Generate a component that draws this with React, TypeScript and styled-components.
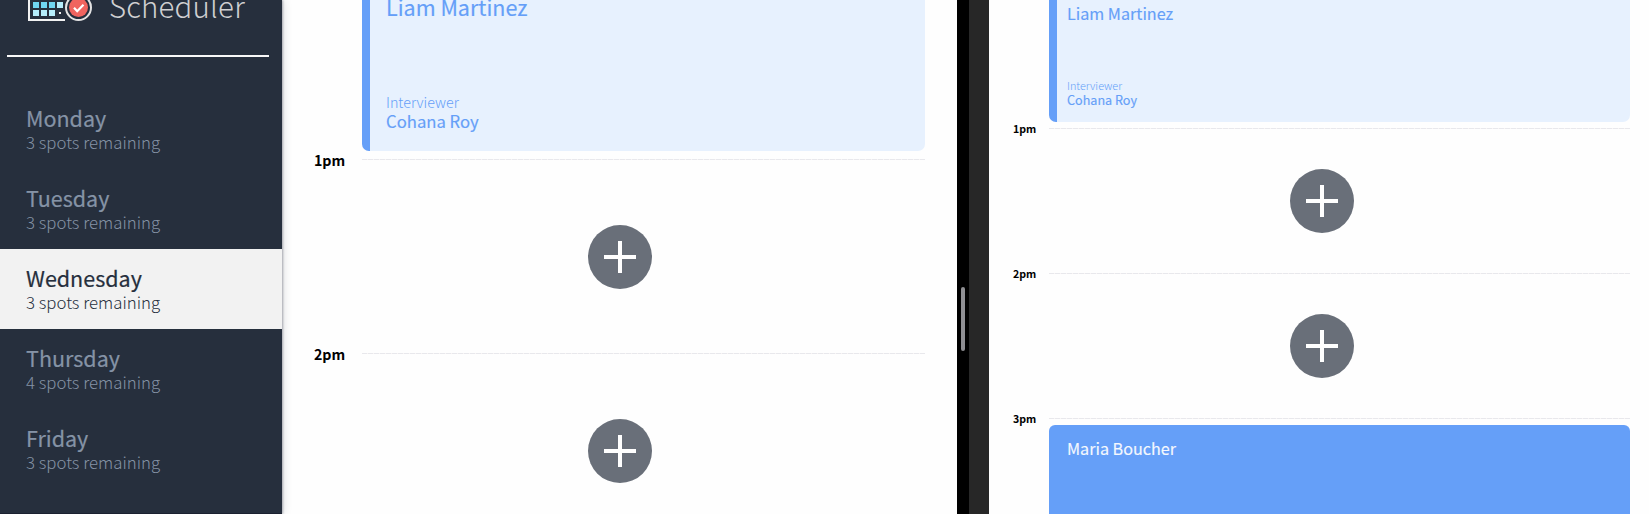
import React from "react";
import styled, { createGlobalStyle } from "styled-components";

const GlobalStyle = createGlobalStyle`
  *, *::before, *::after { box-sizing: border-box; }
  html, body, #root { margin: 0; height: 100%; }
  body {
    overflow: hidden;
    background: #fefefe;
    font-family: "Noto Sans CJK SC", "Noto Sans", sans-serif;
  }
`;

const Layout = styled.div`
  display: flex;
  width: 1649px;
  height: 514px;
  overflow: hidden;
`;

const Sidebar = styled.aside`
  position: relative;
  z-index: 1;
  flex: 0 0 282px;
  height: 100%;
  background: #262f3d;
  border-bottom: 1px solid #1b2130;
  box-shadow: 1px 0 2px rgba(39, 47, 63, 0.35), 2px 0 8px rgba(39, 47, 63, 0.14);
`;

const Brand = styled.div`
  display: flex;
  align-items: flex-end;
  height: 55px;
  padding: 0 0 31px 28px;
`;

const BrandName = styled.span`
  margin-left: 16px;
  height: 38px;
  line-height: 38px;
  font-size: 29.4px;
  font-weight: 300;
  letter-spacing: 0.2px;
  color: #d0d0d2;
`;

const Divider = styled.hr`
  width: 262px;
  height: 2px;
  margin: 0 0 32px 7px;
  border: 0;
  background: #f8f8f8;
`;

const DayItem = styled.div<{ $active?: boolean }>`
  height: 80px;
  padding: 16px 0 0 26px;
  background: ${(p) => (p.$active ? "#f2f2f2" : "transparent")};
  color: ${(p) => (p.$active ? "#262f3d" : "#8593a6")};
`;

const DayName = styled.div`
  line-height: 25px;
  font-size: 21.5px;
  font-weight: 400;
  -webkit-text-stroke: 0.2px currentColor;
`;

const Spots = styled.div`
  line-height: 24px;
  font-size: 16.8px;
  font-weight: 300;
`;

const Panel = styled.main<{ $width: number; $gutter: number; $right: number }>`
  display: flex;
  flex-direction: column;
  flex: 0 0 ${(p) => p.$width}px;
  height: 100%;
  padding: 0 ${(p) => p.$right}px 0 ${(p) => p.$gutter}px;
  background: #fefefe;
`;

const Card = styled.article<{ $height: number; $indent: number; $gap: number }>`
  display: flex;
  flex-direction: column;
  justify-content: space-between;
  flex: 0 0 ${(p) => p.$height}px;
  margin: 0 0 ${(p) => p.$gap}px ${(p) => p.$indent}px;
  border-left: 8px solid #659ff8;
  border-radius: 0 0 7px 7px;
  background: #e7f1fe;
  color: #659ff8;
`;

const BookedCard = styled.article<{ $indent: number }>`
  flex: 0 0 120px;
  margin-left: ${(p) => p.$indent}px;
  padding: 10px 0 0 18px;
  border-radius: 6px 6px 0 0;
  background: #659ff8;
  color: #f4f8fe;
`;

const Label = styled.div<{ $size: number; $line: number; $weight?: number }>`
  line-height: ${(p) => p.$line}px;
  font-size: ${(p) => p.$size}px;
  font-weight: ${(p) => p.$weight ?? 400};
  -webkit-text-stroke: ${(p) => (p.$weight ? 0 : 0.15)}px currentColor;
  white-space: nowrap;
`;

const CardBody = styled.div<{ $left: number; $bottom?: number; $top?: number }>`
  padding: ${(p) => p.$top ?? 0}px 0 ${(p) => p.$bottom ?? 0}px ${(p) => p.$left}px;
`;

const HourRow = styled.div<{ $label: number }>`
  display: grid;
  grid-template-columns: ${(p) => p.$label}px 1fr;
  flex: 0 0 1px;
  height: 1px;
`;

const HourText = styled.span<{ $size: number }>`
  height: 20px;
  margin-top: -9px;
  line-height: 20px;
  font-size: ${(p) => p.$size}px;
  font-weight: 700;
  color: #000;
`;

const HourLine = styled.span`
  height: 1px;
  background: repeating-linear-gradient(90deg, #e8e8ec 0 5px, #f8f4f4 5px 6px);
`;

const EmptySlot = styled.div<{ $height: number; $offset: number; $top: number }>`
  flex: 0 0 ${(p) => p.$height}px;
  padding: ${(p) => p.$top}px 0 0 ${(p) => p.$offset}px;
`;

const AddButton = styled.button`
  display: block;
  width: 64px;
  height: 64px;
  padding: 0;
  border: 0;
  border-radius: 50%;
  background: #696f79;
`;

const SplitBar = styled.div`
  display: flex;
  align-items: flex-start;
  flex: 0 0 12px;
  padding: 287px 0 0 4px;
  background: #000;
`;

const Handle = styled.div`
  width: 4px;
  height: 64px;
  border-radius: 2px;
  background: #8e8e92;
`;

const Edge = styled.div`
  flex: 0 0 20px;
  background: #272727;
`;

const Logo = () => (
  <svg width="65" height="24" viewBox="0 0 65 24" fill="none">
    <path d="M1 0V20H37" stroke="#f2f2f2" strokeWidth="2" />
    <g fill="#70d6f2">
      <rect x="5" y="2" width="6" height="6" />
      <rect x="13" y="2" width="6" height="6" />
      <rect x="21" y="2" width="6" height="6" />
    </g>
    <g fill="#b5edfb">
      <rect x="29" y="2" width="6" height="6" />
      <rect x="5" y="10" width="6" height="6" />
      <rect x="13" y="10" width="6" height="6" />
      <rect x="21" y="10" width="6" height="6" />
    </g>
    <rect x="31" y="12" width="2" height="2" fill="#f2f2f2" />
    <circle cx="50.5" cy="7.5" r="12.5" fill="#262f3d" stroke="#e3e3e3" strokeWidth="2" />
    <circle cx="50.5" cy="7.5" r="9.5" fill="#f0645f" />
    <path d="M46 7.8l3.2 3.4 6.3-6.4" stroke="#fff" strokeWidth="2.2" />
  </svg>
);

const Plus = () => (
  <svg width="64" height="64" viewBox="0 0 64 64" fill="#fff">
    <rect x="16" y="30" width="32" height="4" />
    <rect x="30" y="16" width="4" height="32" />
  </svg>
);

const days = [
  { name: "Monday", spots: 3 },
  { name: "Tuesday", spots: 3 },
  { name: "Wednesday", spots: 3 },
  { name: "Thursday", spots: 4 },
  { name: "Friday", spots: 3 },
];

export default function App() {
  return (
    <>
      <GlobalStyle />
      <Layout>
        <Sidebar>
          <Brand>
            <Logo />
            <BrandName>Scheduler</BrandName>
          </Brand>
          <Divider />
          {days.map((d) => (
            <DayItem key={d.name} $active={d.name === "Wednesday"}>
              <DayName>{d.name}</DayName>
              <Spots>{d.spots} spots remaining</Spots>
            </DayItem>
          ))}
        </Sidebar>

        <Panel $width={675} $gutter={32} $right={32}>
          <Card $height={151} $indent={48} $gap={8}>
            <CardBody $left={16}>
              <Label $size={21.5} $line={13}>Liam Martinez</Label>
            </CardBody>
            <CardBody $left={16} $bottom={20}>
              <Label $size={14.3} $line={19} $weight={300}>Interviewer</Label>
              <Label $size={16.7} $line={20}>Cohana Roy</Label>
            </CardBody>
          </Card>
          <HourRow $label={48}>
            <HourText $size={14.2}>1pm</HourText>
            <HourLine />
          </HourRow>
          <EmptySlot $height={193} $top={65} $offset={274}>
            <AddButton aria-label="Add"><Plus /></AddButton>
          </EmptySlot>
          <HourRow $label={48}>
            <HourText $size={14.2}>2pm</HourText>
            <HourLine />
          </HourRow>
          <EmptySlot $height={193} $top={65} $offset={274}>
            <AddButton aria-label="Add"><Plus /></AddButton>
          </EmptySlot>
        </Panel>

        <SplitBar>
          <Handle />
        </SplitBar>
        <Edge />

        <Panel $width={660} $gutter={24} $right={19}>
          <Card $height={122} $indent={36} $gap={6}>
            <CardBody $left={10} $top={3}>
              <Label $size={16.15} $line={20}>Liam Martinez</Label>
            </CardBody>
            <CardBody $left={10} $bottom={14}>
              <Label $size={10.8} $line={14} $weight={300}>Interviewer</Label>
              <Label $size={12.6} $line={16}>Cohana Roy</Label>
            </CardBody>
          </Card>
          <HourRow $label={36}>
            <HourText $size={10.6}>1pm</HourText>
            <HourLine />
          </HourRow>
          <EmptySlot $height={144} $top={40} $offset={277}>
            <AddButton aria-label="Add"><Plus /></AddButton>
          </EmptySlot>
          <HourRow $label={36}>
            <HourText $size={10.6}>2pm</HourText>
            <HourLine />
          </HourRow>
          <EmptySlot $height={144} $top={40} $offset={277}>
            <AddButton aria-label="Add"><Plus /></AddButton>
          </EmptySlot>
          <HourRow $label={36}>
            <HourText $size={10.6}>3pm</HourText>
            <HourLine />
          </HourRow>
          <EmptySlot $height={6} $top={0} $offset={0} />
          <BookedCard $indent={36}>
            <Label $size={16.15} $line={26}>Maria Boucher</Label>
          </BookedCard>
        </Panel>
      </Layout>
    </>
  );
}
